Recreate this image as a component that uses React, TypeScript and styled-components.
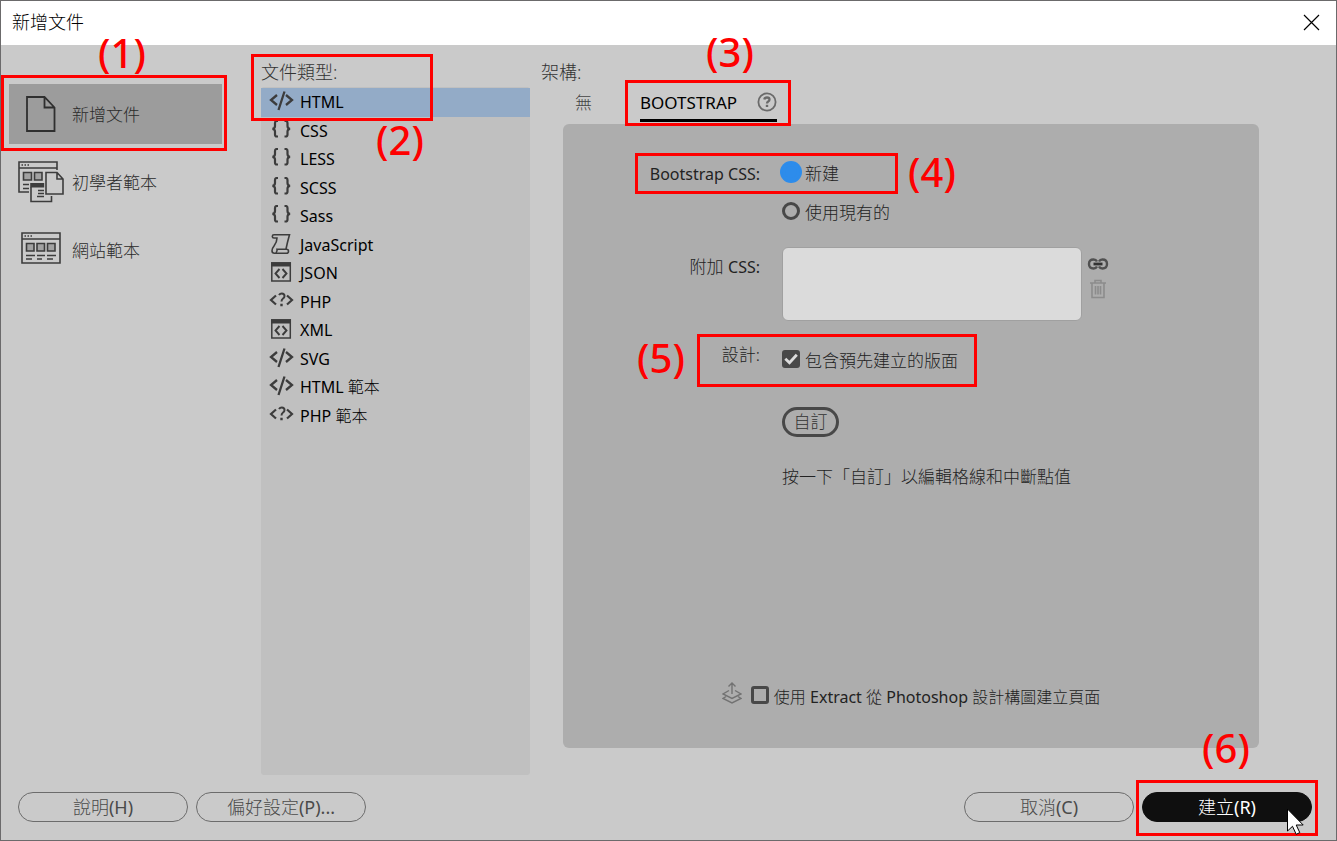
import React from "react";
import styled, { createGlobalStyle, css } from "styled-components";

const ink = "#3c3c3c";
const red = "#fe0000";

const GlobalStyle = createGlobalStyle`
  *, *::before, *::after { box-sizing: border-box; }
  body {
    margin: 0;
    background: #cacaca;
    color: #161616;
    font-family: "Noto Sans", "Noto Sans CJK TC", sans-serif;
    font-size: 17px;
    font-weight: 300;
    line-height: 24px;
  }
  button, input, textarea { font: inherit; color: inherit; }
  button { background: none; border: 0; padding: 0; }
`;

const Dialog = styled.div`
  min-height: 100vh;
  display: flex;
  flex-direction: column;
  border: 1px solid #6b6a6b;
  background: #cacaca;
  overflow: hidden;
`;

const TitleBar = styled.header`
  height: 44px;
  flex: none;
  display: flex;
  align-items: center;
  justify-content: space-between;
  padding: 0 16px 2px 11px;
  background: #fff;
`;

const Title = styled.h1`
  margin: 0;
  font-size: 18px;
  font-weight: 300;
  color: #000;
`;

const CloseButton = styled.button`
  display: flex;
`;

const Latin = styled.span`
  font-weight: 400;
`;

const Body = styled.main`
  flex: 1;
  display: flex;
`;

const Sidebar = styled.nav`
  width: 213px;
  flex: none;
  margin: 39px 39px 0 8px;
  display: flex;
  flex-direction: column;
  gap: 8px;
`;

const SideItem = styled.button<{ $active?: boolean }>`
  position: relative;
  height: 60px;
  display: flex;
  align-items: center;
  background: ${(p) => (p.$active ? "#9c9c9c" : "transparent")};
  color: #2b2b2b;
`;

const SideIcon = styled.span`
  width: 63px;
  display: flex;
  justify-content: center;
`;

const SideText = styled.span`
  padding-top: 2px;
`;

const TypeColumn = styled.section`
  width: 269px;
  flex: none;
  display: flex;
  flex-direction: column;
`;

const Heading = styled.h2`
  position: relative;
  margin: 0;
  padding-top: 15px;
  height: 42px;
  font-size: 18px;
  font-weight: 300;
  color: #333;
`;

const TypePanel = styled.div`
  flex: 1;
  background: #c0c0c0;
  border-radius: 3px;
  padding-top: 1px;
`;

const TypeList = styled.ul`
  height: 342px;
  margin: 0;
  padding: 0;
  list-style: none;
  display: grid;
  grid-auto-rows: 1fr;
`;

const TypeRow = styled.button<{ $active?: boolean }>`
  width: 100%;
  height: 100%;
  display: flex;
  align-items: center;
  gap: 6px;
  padding-left: 8px;
  font-size: 16px;
  color: #000;
  background: ${(p) => (p.$active ? "#93abc7" : "transparent")};
`;

const TypeIcon = styled.svg`
  width: 25px;
  height: 22px;
  padding-bottom: 2px;
  fill: none;
  stroke: ${ink};
  stroke-width: 2;
`;

const Framework = styled.section`
  flex: 1;
  min-width: 0;
  display: flex;
  flex-direction: column;
  padding-left: 11px;
`;

const Tabs = styled.div`
  display: flex;
  gap: 48px;
  height: 37px;
  padding-left: 34px;
  align-items: flex-start;
`;

const Tab = styled.button<{ $active?: boolean }>`
  position: relative;
  display: flex;
  align-items: center;
  gap: 20px;
  height: 35px;
  padding-bottom: ${(p) => (p.$active ? "0" : "3px")};
  color: ${(p) => (p.$active ? "#000" : "#444")};
  border-bottom: ${(p) => (p.$active ? "3px solid #000" : "0")};
  svg { margin-bottom: 2px; }
`;

const Panel = styled.form`
  flex: 1;
  display: flex;
  flex-direction: column;
  margin: 0 77px 27px 22px;
  padding: 30px 0 39px;
  border-radius: 6px;
  background: #adadad;
  color: #222;
`;

const FormRow = styled.div<{ $gap?: number }>`
  position: relative;
  display: flex;
  align-items: flex-start;
  gap: 22px;
  margin-top: ${(p) => p.$gap ?? 0}px;
`;

const FormLabel = styled.span`
  width: 197px;
  flex: none;
  padding-top: 8px;
  text-align: right;
  ${Latin} { font-size: 16px; }
`;

const Choice = styled.label<{ $top?: number }>`
  display: flex;
  align-items: center;
  gap: 5px;
  margin-top: ${(p) => p.$top ?? 0}px;
`;

const Stack = styled.div`
  display: flex;
  flex-direction: column;
  gap: 15px;
  padding-top: 8px;
`;

const Radio = styled.input.attrs({ type: "radio" })`
  appearance: none;
  width: 18px;
  height: 18px;
  margin: 0 0 4px;
  border: 3px solid #484848;
  border-radius: 50%;
  &:checked {
    border-color: #2d8ceb;
    background: #2d8ceb;
    box-shadow: 0 0 0 2px #2d8ceb;
  }
`;

const CheckBox = styled.span`
  position: relative;
  display: flex;
  margin-bottom: 4px;
  svg {
    position: absolute;
    inset: 0;
    pointer-events: none;
    visibility: hidden;
  }
  input:checked + svg { visibility: visible; }
`;

const CheckInput = styled.input.attrs({ type: "checkbox" })`
  appearance: none;
  width: 18px;
  height: 18px;
  margin: 0;
  border: 3px solid #484848;
  border-radius: 3px;
  &:checked { background: #484848; }
`;

const CssFiles = styled.textarea`
  width: 300px;
  height: 74px;
  resize: none;
  border: 1px solid #a0a0a0;
  border-radius: 6px;
  background: #dbdbdb;
  outline: none;
`;

const FileTools = styled.div`
  display: flex;
  flex-direction: column;
  align-items: center;
  gap: 8px;
  margin-left: -17px;
  padding-top: 10px;
  button { display: flex; }
`;

const pill = css`
  height: 30px;
  border-radius: 15px;
  display: flex;
  align-items: center;
  justify-content: center;
`;

const CustomButton = styled.button`
  ${pill}
  width: 57px;
  border: 3px solid #484848;
  color: #333;
`;

const Hint = styled.p`
  margin: 28px 0 0;
`;

const Offset = styled.div`
  margin: 34px 0 0 219px;
`;

const ExtractRow = styled.div`
  display: flex;
  justify-content: center;
  align-items: flex-start;
  gap: 9px;
  margin-top: auto;
  font-size: 16px;
  > svg { margin-top: -4px; }
`;

const Footer = styled.footer`
  flex: none;
  display: flex;
  gap: 8px;
  padding: 17px 24px 18px 17px;
`;

const Spacer = styled.div`
  flex: 1;
`;

const FooterButton = styled.button<{ $primary?: boolean }>`
  ${pill}
  position: relative;
  width: 170px;
  font-size: 18px;
  border: 1px solid ${(p) => (p.$primary ? "#0f0f0f" : "#6c6c6c")};
  background: ${(p) => (p.$primary ? "#0f0f0f" : "transparent")};
  color: ${(p) => (p.$primary ? "#fff" : "#4a4a4a")};
`;

const Frame = styled.span<{ $inset: string }>`
  position: absolute;
  inset: ${(p) => p.$inset};
  border: 3px solid ${red};
  pointer-events: none;
  z-index: 1;
`;

const Step = styled.span<{ $x: number; $y: number }>`
  position: absolute;
  left: ${(p) => p.$x}px;
  top: ${(p) => p.$y}px;
  color: ${red};
  font-size: 40px;
  font-weight: 500;
  line-height: 48px;
  white-space: nowrap;
`;

const Pointer = styled.svg`
  position: absolute;
  right: 5px;
  top: 15px;
  z-index: 2;
`;

function Callout({ n, inset, x, y }: { n: number; inset: string; x: number; y: number }) {
  return (
    <Frame $inset={inset}>
      <Step $x={x} $y={y}>({n})</Step>
    </Frame>
  );
}

type Kind = "code" | "braces" | "script" | "window" | "php";

const glyphs: Record<Kind, React.ReactNode> = {
  code: <path strokeWidth="2.300" d="M8 4 2 9l6 5M17 4l6 5-6 5M9.500 19 15.500.5" />,
  braces: (
    <path
      strokeWidth="2.200"
      d="M9 1H7.800Q6 1 6 3v3Q6 8.400 3.500 8.800 6 9.300 6 11.500v3q0 2 1.800 2H9M15.500 1h1.200q1.800 0 1.800 2v3q0 2.400 2.500 2.800-2.500.5-2.500 2.700v3q0 2-1.800 2h-1.200"
    />
  ),
  script: (
    <path
      strokeWidth="1.600"
      d="M5 .8h15.500q-2 7-3.500 14.200M5 .8Q3.300.8 3.300 2.400T5 4h3Q8 8 5 12 3 14.500 3 16.800 3 19.200 5.500 19.200h12q2 0 2-2t-2-2H8q.5 2-1 3.500"
    />
  ),
  window: (
    <>
      <path strokeWidth="1.500" d="M2.800 1h18.500v18H2.800z" />
      <path fill={ink} stroke="none" d="M2 .2h20v4.300H2z" />
      <path strokeWidth="1.900" d="m10.500 7-4 4.500 4 4.500M13.500 7l4 4.500-4 4.500" />
    </>
  ),
  php: (
    <>
      <path strokeWidth="2.200" d="M7 4.500 2 9l5 4.500M18 4.500 23 9l-5 4.500" />
      <path d="M10 4q1-1.600 2.800-1.600 2.700 0 2.700 2.500 0 1.600-1.500 2.600-1.500 1-1.500 3.100" />
      <path fill={ink} stroke="none" d="M11.300 12.800h2.400v2.400h-2.400z" />
    </>
  ),
};

const types: [string, Kind, string?][] = [
  ["HTML", "code"],
  ["CSS", "braces"],
  ["LESS", "braces"],
  ["SCSS", "braces"],
  ["Sass", "braces"],
  ["JavaScript", "script"],
  ["JSON", "window"],
  ["PHP", "php"],
  ["XML", "window"],
  ["SVG", "code"],
  ["HTML", "code", "範本"],
  ["PHP", "php", "範本"],
];

const PageIcon = () => (
  <svg width="30" height="36" viewBox="0 0 30 36" fill="none" stroke="#2f2f2f" strokeWidth="1.800">
    <path d="M1 1h17.500l10 10.500V35H1zM18.500 1v10.500h10" />
  </svg>
);

const StarterIcon = () => (
  <svg width="46" height="42" viewBox="0 0 46 42" fill="none" stroke={ink} strokeWidth="1.600">
    <path d="M39 9V1H1v30h10M1 7h38" />
    <path strokeDasharray="1.500 1.500" strokeWidth="1.500" d="M3.500 4h8" />
    <path fill="#a2a2a2" d="M5.500 11.500h8V19h-8zM16.500 11.500h7.500V19h-7.500z" />
    <path d="M5 23.500h6M5 27.500h6M13 26v14.500h20.500V35" />
    <path fill={ink} stroke="none" d="M12.200 22h14v4.500h-14z" />
    <path d="M20 29.500h6M20 32.500h6M19 35.500h7" />
    <path fill="#cacaca" d="M28 11.500h11l6 6.500v15H28zM39 11.500V18h6" />
  </svg>
);

const SiteIcon = () => (
  <svg width="40" height="36" viewBox="0 0 40 36" fill="none" stroke={ink} strokeWidth="1.600">
    <path d="M1 1h38v30H1zM1 7h38" />
    <path strokeDasharray="1.500 1.500" strokeWidth="1.500" d="M3.500 4h8" />
    <path fill="#a2a2a2" d="M5.500 11.500H13V19H5.500zM16 11.500h7.500V19H16zM26.500 11.500H34V19h-7.500z" />
    <path d="M5 23.500h9M16 23.500h8M26 23.500h9M5 27h6M16 27h5M26 27h6" />
  </svg>
);

const Check = ({ id, checked }: { id: string; checked?: boolean }) => (
  <CheckBox>
    <CheckInput id={id} defaultChecked={checked} />
    <svg width="18" height="18" viewBox="0 0 18 18" fill="none" stroke="#dcdcdc" strokeWidth="2.800">
      <path d="m3.300 8.800 4.200 4 7.300-8" />
    </svg>
  </CheckBox>
);

export default function App() {
  return (
    <>
      <GlobalStyle />
      <Dialog>
        <TitleBar>
          <Title>新增文件</Title>
          <CloseButton aria-label="關閉">
            <svg width="17" height="17" viewBox="0 0 17 17" stroke="#000" strokeWidth="1.200">
              <path d="m1 1 15 15M16 1 1 16" />
            </svg>
          </CloseButton>
        </TitleBar>

        <Body>
          <Sidebar>
            <SideItem $active>
              <SideIcon><PageIcon /></SideIcon>
              <SideText>新增文件</SideText>
              <Callout n={1} inset="-9px -5px -7px -8px" x={94} y={-49} />
            </SideItem>
            <SideItem>
              <SideIcon><StarterIcon /></SideIcon>
              <SideText>初學者範本</SideText>
            </SideItem>
            <SideItem>
              <SideIcon><SiteIcon /></SideIcon>
              <SideText>網站範本</SideText>
            </SideItem>
          </Sidebar>

          <TypeColumn>
            <Heading>
              文件類型:
              <Callout n={2} inset="9px 97px -34px -10px" x={122} y={59} />
            </Heading>
            <TypePanel>
              <TypeList>
                {types.map(([name, kind, suffix], i) => (
                  <li key={i}>
                    <TypeRow $active={i === 0}>
                      <TypeIcon viewBox="0 0 25 20">{glyphs[kind]}</TypeIcon>
                      <span>
                        <Latin>{name}</Latin>
                        {suffix && ` ${suffix}`}
                      </span>
                    </TypeRow>
                  </li>
                ))}
              </TypeList>
            </TypePanel>
          </TypeColumn>

          <Framework>
            <Heading>架構:</Heading>
            <Tabs>
              <Tab type="button">無</Tab>
              <Tab type="button" $active>
                <Latin>BOOTSTRAP</Latin>
                <svg width="20" height="20" viewBox="0 0 20 20" fill="none" stroke="#6a6a6a" strokeWidth="1.800">
                  <circle cx="10" cy="10" r="8.600" />
                  <path strokeWidth="2.300" d="M7.300 7.400q.4-1.900 2.700-1.900 2.500 0 2.500 2 0 1.200-1.300 1.900-1.200.7-1.200 2.200" />
                  <path fill="#6a6a6a" stroke="none" d="M8.800 12.800h2.400V15H8.800z" />
                </svg>
                <Callout n={3} inset="-7px -14px -7px -15px" x={78} y={-55} />
              </Tab>
            </Tabs>

            <Panel onSubmit={(e) => e.preventDefault()}>
              <FormRow>
                <FormLabel><Latin>Bootstrap CSS:</Latin></FormLabel>
                <Stack>
                  <Choice><Radio name="css" defaultChecked />新建</Choice>
                  <Choice><Radio name="css" />使用現有的</Choice>
                </Stack>
                <Callout n={4} inset="-1px 361px 31px 72px" x={270} y={-8} />
              </FormRow>

              <FormRow $gap={22}>
                <FormLabel as="label" htmlFor="extra-css">附加 <Latin>CSS:</Latin></FormLabel>
                <CssFiles id="extra-css" />
                <FileTools>
                  <button type="button" aria-label="連結">
                    <svg width="22" height="14" viewBox="0 0 22 14" fill="none" stroke="#505050" strokeWidth="2.400">
                      <path d="M10 4.500Q9 2.500 6.500 2.500 2 2.500 2 7t4.500 4.500Q9 11.500 10 9.500M12 4.500q1-2 3.500-2 4.500 0 4.500 4.500t-4.500 4.500q-2.500 0-3.500-2" />
                      <path stroke="#333" strokeWidth="2.800" d="M6.500 7h9" />
                    </svg>
                  </button>
                  <button type="button" aria-label="刪除">
                    <svg width="18" height="20" viewBox="0 0 18 20" fill="none" stroke="#8c8c8c" strokeWidth="1.600">
                      <path d="M1 4h16M6 4V1.500h6V4M3 4v14.500h12V4M6.500 7v8.500M9 7v8.500M11.500 7v8.500" />
                    </svg>
                  </button>
                </FileTools>
              </FormRow>

              <FormRow $gap={14}>
                <FormLabel>設計:</FormLabel>
                <Choice $top={14} htmlFor="layout">
                  <Check id="layout" checked />
                  包含預先建立的版面
                </Choice>
                <Callout n={5} inset="-1px 282px -14px 134px" x={-63} y={-3} />
              </FormRow>

              <Offset>
                <CustomButton type="button">自訂</CustomButton>
                <Hint>按一下「自訂」以編輯格線和中斷點值</Hint>
              </Offset>

              <ExtractRow>
                <svg width="20" height="24" viewBox="0 0 20 24" fill="none" stroke="#727272" strokeWidth="1.400">
                  <path d="M10 13V2M6.500 5.500 10 2l3.500 3.500M7 9.500 1 13l9 4.500 9-4.500-6-3.500M4 15.500 1 17.500 10 22l9-4.500-3-2" />
                </svg>
                <Choice htmlFor="extract">
                  <Check id="extract" />
                  <span>
                    使用 <Latin>Extract</Latin> 從 <Latin>Photoshop</Latin> 設計構圖建立頁面
                  </span>
                </Choice>
              </ExtractRow>
            </Panel>
          </Framework>
        </Body>

        <Footer>
          <FooterButton><span>說明<Latin>(H)</Latin></span></FooterButton>
          <FooterButton><span>偏好設定<Latin>(P)...</Latin></span></FooterButton>
          <Spacer />
          <FooterButton><span>取消<Latin>(C)</Latin></span></FooterButton>
          <FooterButton $primary>
            <span>建立<Latin>(R)</Latin></span>
            <Callout n={6} inset="-13px -7px -15px -7px" x={63} y={-59} />
            <Pointer width="20" height="28" viewBox="0 0 20 28" fill="#fff" stroke="#000" strokeWidth="1">
              <path d="M1.500 1v22l5-4.700 3.700 8 3.600-1.700-3.600-7.600h7z" />
            </Pointer>
          </FooterButton>
        </Footer>
      </Dialog>
    </>
  );
}
